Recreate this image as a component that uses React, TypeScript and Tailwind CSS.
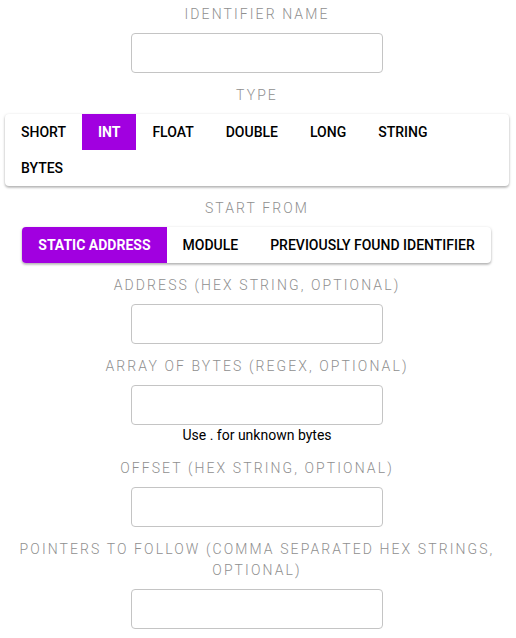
import React from "react";

function Label({ children, className = "" }: { children: React.ReactNode; className?: string }) {
  return (
    <div
      className={`text-center text-[14px] leading-[21px] tracking-[0.15em] font-light text-[#8f8f8f] uppercase ${className}`}
    >
      {children}
    </div>
  );
}

function Input() {
  return (
    <div className="w-[252px] h-[40px] rounded-[4px] border border-[#c4c4c4] bg-white" />
  );
}

export default function App() {
  const types = ["SHORT", "INT", "FLOAT", "DOUBLE", "LONG", "STRING", "BYTES"];
  const starts = ["STATIC ADDRESS", "MODULE", "PREVIOUSLY FOUND IDENTIFIER"];
  return (
    <div
      className="w-[514px] h-[638px] bg-white flex flex-col items-center overflow-hidden"
      style={{ fontFamily: "Roboto, 'Liberation Sans', sans-serif" }}
    >
      <Label className="mt-[4px] mb-[8px]">Identifier name</Label>
      <Input />
      <Label className="mt-[12px] mb-[8px]">Type</Label>
      <div className="w-[504px] bg-white rounded-[4px] shadow-[0_1px_3px_rgba(0,0,0,0.25),0_2px_2px_rgba(0,0,0,0.12)] flex flex-wrap">
        {types.map((t) => (
          <div
            key={t}
            className={`h-[36px] px-[16px] flex items-center text-[14px] ${
              t === "INT" ? "bg-[#a100e0] text-white font-bold" : "text-black font-medium"
            } ${t === "SHORT" ? "rounded-tl-[4px]" : ""}`}
          >
            {t}
          </div>
        ))}
      </div>
      <Label className="mt-[12px] mb-[8px]">Start from</Label>
      <div className="flex bg-white rounded-[4px] shadow-[0_1px_3px_rgba(0,0,0,0.25),0_2px_2px_rgba(0,0,0,0.12)] ml-[-1px]">
        {starts.map((s, i) => (
          <div
            key={s}
            className={`h-[36px] px-[16px] flex items-center text-[14px] ${
              i === 0 ? "bg-[#a100e0] text-white font-bold rounded-l-[4px]" : "text-black font-medium"
            }`}
          >
            {s}
          </div>
        ))}
      </div>
      <Label className="mt-[12px] mb-[8px]">Address (hex string, optional)</Label>
      <Input />
      <Label className="mt-[12px] mb-[8px]">Array of bytes (regex, optional)</Label>
      <Input />
      <div className="text-[14px] leading-[20px] text-black">Use . for unknown bytes</div>
      <Label className="mt-[13px] mb-[8px]">Offset (hex string, optional)</Label>
      <Input />
      <Label className="mt-[12px] mb-[8px] max-w-[480px]">
        Pointers to follow (comma separated hex strings, optional)
      </Label>
      <Input />
    </div>
  );
}
